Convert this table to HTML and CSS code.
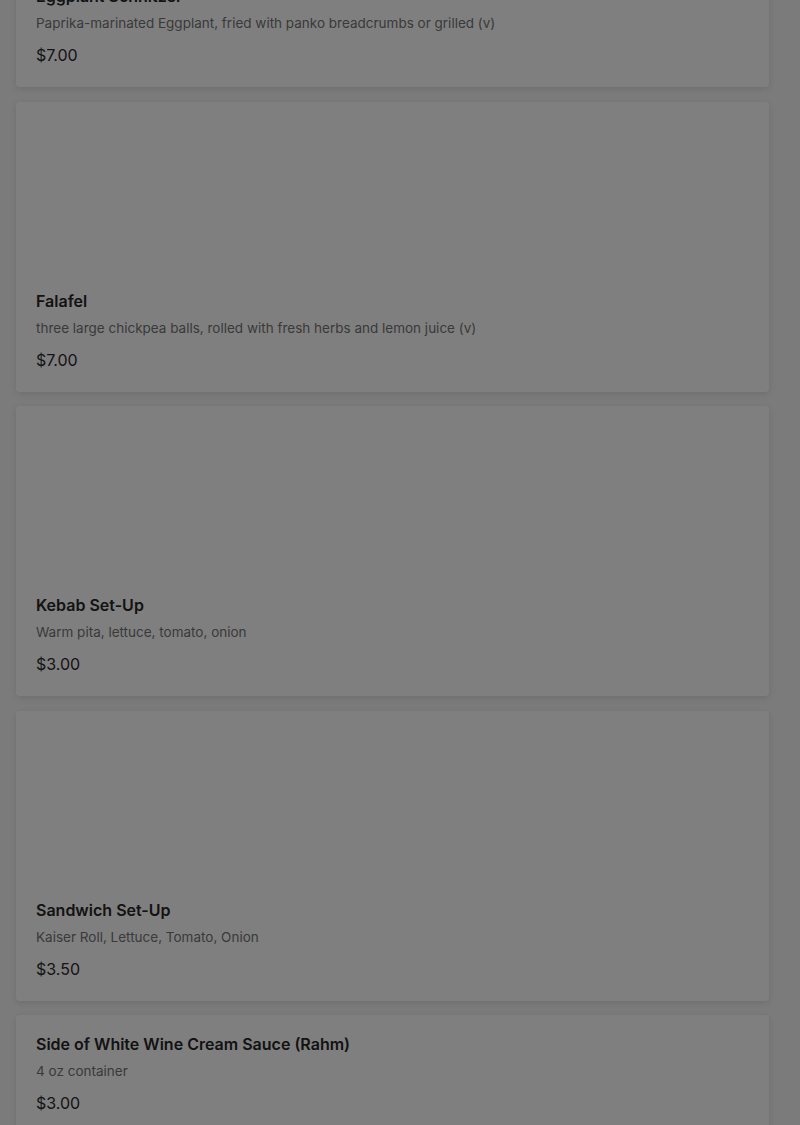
FILE: index.html
```html
<!DOCTYPE html>
<html lang="en">

<head>
    <meta charset="UTF-8">
    <meta name="viewport" content="width=device-width, initial-scale=1.0" />
    <title>Menu</title>
    <link rel="stylesheet" href="styles.css">
</head>

<body>
    <div class="menu-list">
        <!-- Eggplant card, scrolled mostly out of view -->
        <div class="menu-card">
            <div class="card-image"></div>
            <div class="card-body">
                <div class="item-name">Eggplant Schnitzel</div>
                <div class="item-desc">Paprika-marinated Eggplant, fried with panko breadcrumbs or grilled (v)</div>
                <div class="item-price">$7.00</div>
            </div>
        </div>

        <div class="menu-card">
            <div class="card-image"></div>
            <div class="card-body">
                <div class="item-name">Falafel</div>
                <div class="item-desc">three large chickpea balls, rolled with fresh herbs and lemon juice (v)</div>
                <div class="item-price">$7.00</div>
            </div>
        </div>

        <div class="menu-card">
            <div class="card-image"></div>
            <div class="card-body">
                <div class="item-name">Kebab Set-Up</div>
                <div class="item-desc">Warm pita, lettuce, tomato, onion</div>
                <div class="item-price">$3.00</div>
            </div>
        </div>

        <div class="menu-card">
            <div class="card-image"></div>
            <div class="card-body">
                <div class="item-name">Sandwich Set-Up</div>
                <div class="item-desc">Kaiser Roll, Lettuce, Tomato, Onion</div>
                <div class="item-price">$3.50</div>
            </div>
        </div>

        <div class="menu-card">
            <div class="card-body">
                <div class="item-name">Side of White Wine Cream Sauce (Rahm)</div>
                <div class="item-desc">4 oz container</div>
                <div class="item-price">$3.00</div>
            </div>
        </div>
    </div>

    <!-- dimmed backdrop (a modal is open somewhere above) -->
    <div class="backdrop"></div>
</body>

</html>
```

FILE: styles.css
```css
body {
    margin: 0;
    background-color: #f6f6f6;
    font-family: "Inter", "Liberation Sans", sans-serif;
    color: #2a2a2a;
    overflow: hidden;
}

.menu-list {
    display: flex;
    flex-direction: column;
    gap: 14.5px;
    width: 753px;
    margin: -203px 0 0 16px;
}

.menu-card {
    background-color: #ffffff;
    border-radius: 4px;
    box-shadow: 0 2px 6px rgba(0, 0, 0, 0.1);
}

.card-image {
    height: 170px;
}

.card-body {
    padding: 20px 20px 22px;
}

.item-name {
    font-size: 16px;
    line-height: 18px;
    font-weight: 600;
    color: #262626;
}

.item-desc {
    margin-top: 8px;
    font-size: 13.5px;
    line-height: 20px;
    color: #747474;
}

.item-price {
    margin-top: 12px;
    font-size: 16px;
    line-height: 20px;
    color: #2a2a2a;
}

.backdrop {
    position: fixed;
    inset: 0;
    background-color: rgba(0, 0, 0, 0.5);
}
```
